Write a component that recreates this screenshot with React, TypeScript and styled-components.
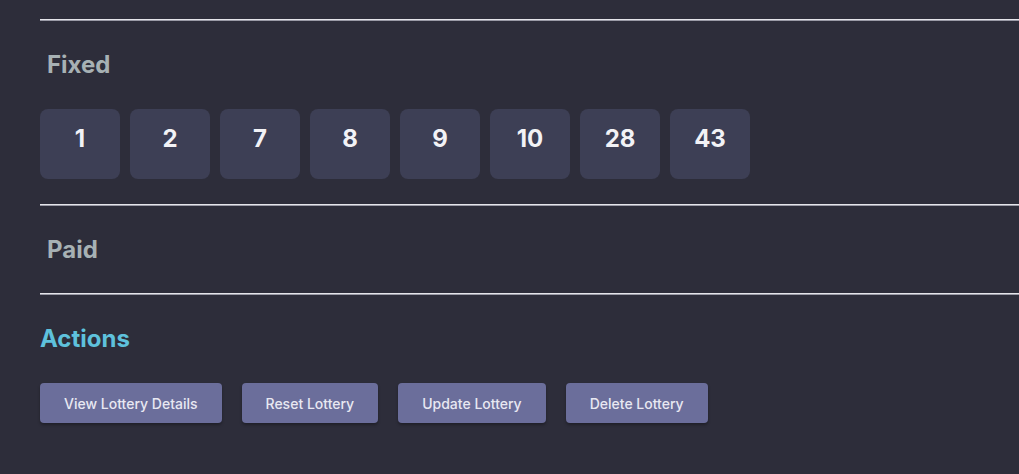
import styled, { createGlobalStyle } from 'styled-components'

const GlobalStyle = createGlobalStyle`
    html, body {
        margin: 0;
        padding: 0;
        background: #2d2d3a;
        font-family: Inter, "Noto Sans", sans-serif;
    }
`

/**
 * Data
 */
const fixedNumbers = [1, 2, 7, 8, 9, 10, 28, 43]
const actions = ['View Lottery Details', 'Reset Lottery', 'Update Lottery', 'Delete Lottery']

/**
 * Styled Components
 */
const Page = styled.div`
    min-height: 474px;
    padding: 19px 0 0 40px;
    box-sizing: border-box;
    overflow: hidden;
`

const Divider = styled.hr`
    margin: 0;
    border: none;
    height: 1px;
    background: #e4e4ea;
    box-shadow: 0 1px 0 #9a9aa6;
`

const SectionTitle = styled.h3<{ $accent?: boolean; $gap?: number }>`
    margin: 30px 0 ${(p) => p.$gap ?? 30}px ${(p) => (p.$accent ? 0 : 7)}px;
    font-size: 24px;
    line-height: 29px;
    font-weight: 700;
    color: ${(p) => (p.$accent ? '#5ec1dc' : '#a7b1b4')};
`

const NumberRow = styled.div`
    display: flex;
    gap: 10px;
    margin-bottom: 25px;
`

const NumberTile = styled.div`
    width: 80px;
    height: 70px;
    box-sizing: border-box;
    padding-bottom: 12px;
    border-radius: 8px;
    background: #3d3f55;
    display: flex;
    align-items: center;
    justify-content: center;
    font-size: 24px;
    font-weight: 700;
    color: #f2f2f6;
`

const ButtonRow = styled.div`
    display: flex;
    gap: 20px;
`

const ActionButton = styled.button`
    height: 40px;
    padding: 0 24px;
    border: none;
    border-radius: 4px;
    background: #6b6e9b;
    color: #e8e8f2;
    font-family: inherit;
    font-size: 14px;
    font-weight: 500;
    box-shadow: 0 2px 3px rgba(0, 0, 0, 0.3);
    cursor: pointer;
`

/**
 * Component
 */
const App = () => (
    <>
        <GlobalStyle />
        <Page>
            <Divider />
            <SectionTitle>Fixed</SectionTitle>
            <NumberRow>
                {fixedNumbers.map((n) => (
                    <NumberTile key={n}>{n}</NumberTile>
                ))}
            </NumberRow>
            <Divider />
            <SectionTitle $gap={29}>Paid</SectionTitle>
            <Divider />
            <SectionTitle $accent>Actions</SectionTitle>
            <ButtonRow>
                {actions.map((a) => (
                    <ActionButton key={a}>{a}</ActionButton>
                ))}
            </ButtonRow>
        </Page>
    </>
)

export default App
